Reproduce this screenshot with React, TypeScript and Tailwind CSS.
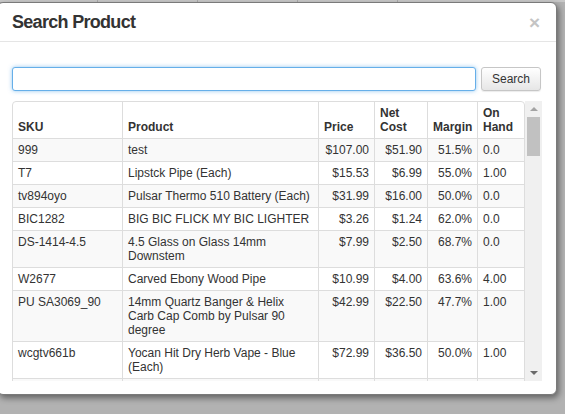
const rows = [
  { sku: "999", name: "test", price: "$107.00", cost: "$51.90", margin: "51.5%", onHand: "0.0" },
  { sku: "T7", name: "Lipstck Pipe (Each)", price: "$15.53", cost: "$6.99", margin: "55.0%", onHand: "1.00" },
  { sku: "tv894oyo", name: "Pulsar Thermo 510 Battery (Each)", price: "$31.99", cost: "$16.00", margin: "50.0%", onHand: "0.0" },
  { sku: "BIC1282", name: "BIG BIC FLICK MY BIC LIGHTER", price: "$3.26", cost: "$1.24", margin: "62.0%", onHand: "0.0" },
  { sku: "DS-1414-4.5", name: "4.5 Glass on Glass 14mm Downstem", price: "$7.99", cost: "$2.50", margin: "68.7%", onHand: "0.0" },
  { sku: "W2677", name: "Carved Ebony Wood Pipe", price: "$10.99", cost: "$4.00", margin: "63.6%", onHand: "4.00" },
  { sku: "PU SA3069_90", name: "14mm Quartz Banger & Helix Carb Cap Comb by Pulsar 90 degree", price: "$42.99", cost: "$22.50", margin: "47.7%", onHand: "1.00" },
  { sku: "wcgtv661b", name: "Yocan Hit Dry Herb Vape - Blue (Each)", price: "$72.99", cost: "$36.50", margin: "50.0%", onHand: "1.00" },
  // next row peeks in under the fold; only its borders show
  { sku: "\u00a0", name: "\u00a0", price: "\u00a0", cost: "\u00a0", margin: "\u00a0", onHand: "\u00a0" },
];

const cell = "border-l border-t border-[#dddddd] px-[5px] py-[4px] align-top first:border-l-0";
const head = "border-l border-[#dddddd] px-[5px] py-[4px] align-bottom text-left font-bold first:border-l-0";

export default function App() {
  return (
    <div
      className="relative w-[565px] h-[414px] overflow-hidden bg-[#b2b2b2] pt-[2px] text-[#333333]"
      style={{ fontFamily: '"Liberation Sans", Arial, sans-serif' }}
    >
      {/* faint page behind the backdrop */}
      <div className="absolute left-0 top-0 flex h-[2px] w-full bg-[#c8c8c8]">
        <div className="w-[98px] border-r border-[#a9a9a9]" />
        <div className="w-[100px] border-r border-[#a9a9a9]" />
        <div className="w-[100px] border-r border-[#a9a9a9]" />
        <div className="w-[100px] border-r border-[#a9a9a9]" />
      </div>

      <div className="relative -ml-[3px] flex h-[393px] w-[560px] flex-col rounded-[6px] border border-[#7a7a7a] bg-white shadow-[2px_3px_6px_rgba(0,0,0,0.45)]">
        {/* header */}
        <div className="flex h-[39px] items-center justify-between border-b border-[#e5e5e5] pl-[14px] pr-[16px]">
          <h3 className="text-[18px] font-bold leading-[22px] tracking-[-0.7px] text-[#333333]">Search Product</h3>
          <span className="text-[19px] font-bold leading-none text-[#c4c4c4]">×</span>
        </div>

        {/* body */}
        <div className="flex flex-1 flex-col px-[14px] pb-[13px] pt-[25px]">
          <div className="flex items-center gap-[5px]">
            <input
              className="h-[24px] w-[464px] rounded-[3px] border border-[#66afe9] bg-white px-[6px] text-[12px] shadow-[0_0_4px_rgba(102,175,233,0.7)] outline-none"
              defaultValue=""
            />
            <button className="h-[24px] w-[60px] rounded-[3px] border border-[#c6c6c6] bg-gradient-to-b from-white to-[#e6e6e6] text-[12px] text-[#333333] shadow-[0_1px_1px_rgba(0,0,0,0.08)]">
              Search
            </button>
          </div>

          <div className="mt-[10px] flex h-[280px]">
            <div className="h-full w-[513px] overflow-hidden">
              <table className="w-[513px] table-fixed border-separate border-spacing-0 rounded-[4px] border border-[#dddddd] text-[12px] leading-[14px]">
                <colgroup>
                  <col className="w-[109px]" />
                  <col className="w-[196px]" />
                  <col className="w-[56px]" />
                  <col className="w-[53px]" />
                  <col className="w-[50px]" />
                  <col className="w-[47px]" />
                </colgroup>
                <thead>
                  <tr>
                    <th className={head}>SKU</th>
                    <th className={head}>Product</th>
                    <th className={head}>Price</th>
                    <th className={head}>Net<br />Cost</th>
                    <th className={head}>Margin</th>
                    <th className={head}>On<br />Hand</th>
                  </tr>
                </thead>
                <tbody>
                  {rows.map((r, i) => (
                    <tr key={i} className={i % 2 === 0 ? "bg-[#f9f9f9]" : "bg-white"}>
                      <td className={cell}>{r.sku}</td>
                      <td className={cell}>{r.name}</td>
                      <td className={cell + " text-right"}>{r.price}</td>
                      <td className={cell + " text-right"}>{r.cost}</td>
                      <td className={cell + " text-right"}>{r.margin}</td>
                      <td className={cell}>{r.onHand}</td>
                    </tr>
                  ))}
                </tbody>
              </table>
            </div>

            {/* scrollbar */}
            <div className="flex h-full w-[17px] flex-col items-center bg-[#f0f0f0]">
              <div className="flex h-[16px] w-full items-center justify-center">
                <div className="h-0 w-0 border-x-[4px] border-b-[4px] border-x-transparent border-b-[#a3a3a3]" />
              </div>
              <div className="h-[39px] w-[13px] bg-[#c1c1c1]" />
              <div className="flex-1" />
              <div className="flex h-[16px] w-full items-center justify-center">
                <div className="h-0 w-0 border-x-[4px] border-t-[4px] border-x-transparent border-t-[#6a6a6a]" />
              </div>
            </div>
          </div>
        </div>
      </div>
    </div>
  );
}
